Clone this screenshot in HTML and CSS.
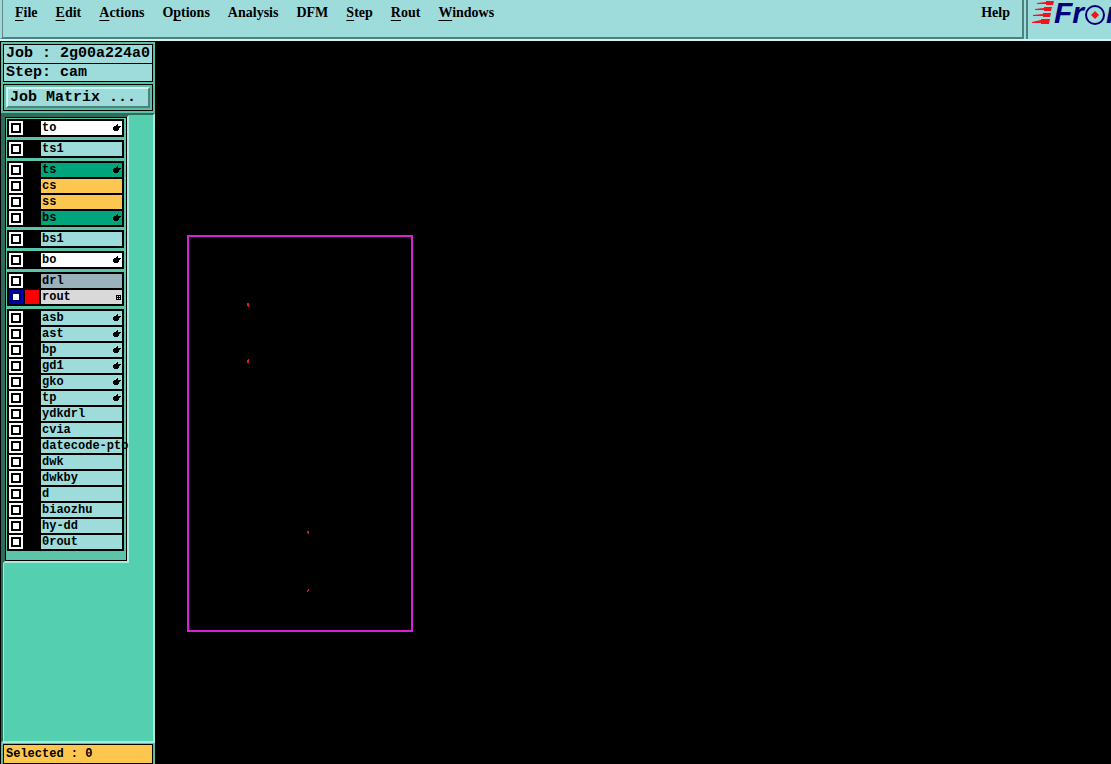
FILE: index.html
```
<!DOCTYPE html>
<html lang="en">
<head>
    <meta charset="UTF-8">
    <meta name="viewport" content="width=device-width, initial-scale=1.0">
    <title>Graphic Editor</title>
    <link rel="stylesheet" href="styles.css">
</head>
<body>
    <header class="topbar">
        <nav class="menubar">
            <button class="menu"><u>F</u>ile</button>
            <button class="menu"><u>E</u>dit</button>
            <button class="menu"><u>A</u>ctions</button>
            <button class="menu">O<u>p</u>tions</button>
            <button class="menu">Analysis</button>
            <button class="menu">DFM</button>
            <button class="menu"><u>S</u>tep</button>
            <button class="menu"><u>R</u>out</button>
            <button class="menu"><u>W</u>indows</button>
            <button class="menu help">Help</button>
        </nav>
        <div class="brand">
            <svg class="flames" width="22" height="25" viewBox="0 0 22 25" fill="#f0141e">
                <path d="M5 3L14 2V1H22L21 5H14V4L5 4Z"/>
                <path d="M3 9L12 8V7H20L19 11H12V10L3 10Z"/>
                <path d="M1 15L11 14V13H19L18 17H11V16L1 16Z"/>
                <path d="M0 22L9 20V19H18L17 24H9V23L0 23Z"/>
            </svg>
            <span class="brand-text">Fr</span>
            <svg class="target" width="22" height="22" viewBox="0 0 22 22">
                <circle cx="11" cy="11" r="9" fill="none" stroke="#00007a" stroke-width="2"/>
                <path d="M11 7L15 11L11 15L7 11Z" fill="#f0141e"/>
            </svg>
            <span class="brand-text">n</span>
        </div>
    </header>

    <div class="workspace">
        <aside class="sidebar">
            <div class="job-info">
                <div class="info-line">Job : 2g00a224a0</div>
                <div class="info-line">Step: cam</div>
            </div>
            <div class="matrix-frame">
                <button class="matrix-button">Job Matrix ...</button>
            </div>
            <div class="layer-area">
                <div class="layer-well">
                    <div class="layers" id="layers"></div>
                </div>
            </div>
            <div class="status">Selected : 0</div>
        </aside>
        <main class="canvas">
            <svg width="100%" height="100%">
                <rect x="33" y="195" width="224" height="395" fill="none" stroke="#d820d8" stroke-width="2"/>
                <g fill="#d8202c" shape-rendering="crispEdges">
                    <path d="M92 262h2v4h-1v-1h-1z"/>
                    <path d="M93 318h1v4h-2v-3h1z"/>
                    <path d="M152 490h2v3h-1v-1h-1z"/>
                    <path d="M153 548h1v2h-1v1h-1v-2h1z"/>
                </g>
            </svg>
        </main>
    </div>

    <script src="script.js"></script>
</body>
</html>
```

FILE: styles.css
```
* {
    box-sizing: border-box;
}
body {
    display: flex;
    flex-direction: column;
    height: 100vh;
    margin: 0;
    overflow: hidden;
    background-color: #000;
    color: #000;
}
button {
    margin: 0;
    padding: 0;
    border: none;
    background: none;
    color: inherit;
    font: inherit;
}

/* top bar */
.topbar {
    display: flex;
    flex-shrink: 0;
    height: 41px;
    background-color: #9ddcdb;
    border-bottom: 2px solid #d5f5f4;
}
.menubar {
    display: flex;
    flex: 1;
    align-items: flex-start;
    gap: 18px;
    padding: 4px 12px 0;
    border-left: 3px ridge #9ddcdb;
    border-right: 2px solid #4e807f;
    border-bottom: 2px solid #4e807f;
    font: bold 14px/18px "Liberation Serif", serif;
}
.menu u {
    text-decoration-thickness: 1px;
    text-underline-offset: 3px;
    text-decoration-skip-ink: none;
}
.help {
    margin-left: auto;
}
.brand {
    display: flex;
    align-items: flex-start;
    width: 85px;
    margin-left: 2px;
    padding-left: 4px;
    overflow: hidden;
    border-left: 2px solid #4e807f;
    color: #00007a;
}
.brand svg {
    flex-shrink: 0;
}
.brand-text {
    margin-top: -2px;
    font: italic bold 30px/30px "Liberation Sans", sans-serif;
}
.target {
    margin-top: 4px;
}

/* sidebar */
.workspace {
    display: flex;
    flex: 1;
    min-height: 0;
}
.sidebar {
    display: flex;
    flex-direction: column;
    width: 155px;
    border-top: 1px solid #000;
    border-left: 1px solid #000;
    background-color: #5cc0a4;
}
.job-info {
    margin: 2px 2px;
    border: 1px solid #000;
    background-color: #9ddcdb;
    font: bold 15px/18px "Liberation Mono", monospace;
}
.info-line {
    padding-left: 2px;
    white-space: nowrap;
}
.info-line + .info-line {
    border-top: 1px solid #000;
    line-height: 17px;
}
.matrix-frame {
    margin: 0 2px 2px;
    padding: 2px;
    border: 1px solid #000;
}
.matrix-button {
    display: block;
    width: 100%;
    padding-left: 2px;
    border: 2px solid;
    border-color: #cdf3f2 #4e807f #4e807f #cdf3f2;
    background-color: #9ddcdb;
    font: bold 15px/17px "Liberation Mono", monospace;
    text-align: left;
}
.layer-area {
    display: flex;
    flex: 1;
    flex-direction: column;
    align-items: flex-start;
    border: 2px solid;
    border-color: #2f6a5b #a5ecd9 #a5ecd9 #2f6a5b;
    background-color: #54cfb0;
}
.layer-well {
    border: 2px solid;
    border-color: #2f6a5b #a5ecd9 #a5ecd9 #2f6a5b;
}
.layer-area::after {
    content: "";
    flex: 1;
    border-left: 1px solid #a5ecd9;
}
.layers {
    display: grid;
    gap: 3px;
    padding: 1px 2px 9px 1px;
    border: 1px solid #000;
    background-color: #5cc4a8;
}
.layer-group {
    display: grid;
    gap: 2px;
    padding: 2px;
    background-color: #000;
}
.layer {
    display: grid;
    grid-template-columns: 14px 14px 81px;
    gap: 2px;
    height: 14px;
}
.layer-check {
    appearance: none;
    width: 14px;
    height: 14px;
    margin: 0;
    border: 2px solid #fff;
    background-color: #fff;
    box-shadow: inset 0 0 0 2px #000;
}
.layer-check:checked {
    border-color: #0000b4;
    box-shadow: inset 0 0 0 2px #00006e;
}
.layer-color.red {
    background-color: #f00;
}
.layer-name {
    display: flex;
    align-items: center;
    justify-content: space-between;
    padding: 0 1px;
    background-color: #9ddcdb;
    font: bold 12px/14px "Liberation Mono", monospace;
    white-space: nowrap;
}
.layer-name svg {
    flex-shrink: 0;
}
.layer-name.white {
    background-color: #fff;
}
.layer-name.mask {
    background-color: #00a57c;
}
.layer-name.signal {
    background-color: #fdc74f;
}
.layer-name.drill {
    background-color: #9bb2bd;
}
.layer-name.rout {
    background-color: #d9d9d9;
}
.status {
    margin: 1px 2px 0;
    padding-left: 2px;
    border: 1px solid #000;
    background-color: #fdc74f;
    font: bold 12px/18px "Liberation Mono", monospace;
}

.canvas {
    flex: 1;
    min-width: 0;
}
.canvas svg {
    display: block;
}
```

FILE: script.js
```
const HAND = `<svg width="8" height="8" viewBox="0 0 8 8" shape-rendering="crispEdges"><path d="M4 0h1v2h3v1h-1v1h-1v2h-1v1h-4v-1h-1v-3h1v-1h2v-1h1z"/></svg>`;
const GRID = `<svg width="5" height="5" viewBox="0 0 5 5" shape-rendering="crispEdges"><path fill-rule="evenodd" d="M0 0h5v5h-5zM1 1v1h1v-1zM3 1v1h1v-1zM1 3v1h1v-1zM3 3v1h1v-1z"/></svg>`;

// [name, kind, icon]
const groups = [
    [['to', 'white', HAND]],
    [['ts1']],
    [['ts', 'mask', HAND], ['cs', 'signal'], ['ss', 'signal'], ['bs', 'mask', HAND]],
    [['bs1']],
    [['bo', 'white', HAND]],
    [['drl', 'drill'], ['rout', 'rout', GRID]],
    [
        ['asb', '', HAND], ['ast', '', HAND], ['bp', '', HAND],
        ['gd1', '', HAND], ['gko', '', HAND], ['tp', '', HAND],
        ['ydkdrl'], ['cvia'], ['datecode-pto'], ['dwk'], ['dwkby'],
        ['d'], ['biaozhu'], ['hy-dd'], ['0rout']
    ]
];

document.getElementById('layers').innerHTML = groups.map(group => `
    <div class="layer-group">
        ${group.map(([name, kind = '', icon = '']) => {
            const active = name === 'rout';
            return `<div class="layer">
                <input type="checkbox" class="layer-check" id="layer-${name}" ${active ? 'checked' : ''}>
                <span class="layer-color ${active ? 'red' : ''}"></span>
                <label class="layer-name ${kind}" for="layer-${name}">${name}${icon}</label>
            </div>`;
        }).join('')}
    </div>`).join('');
```
